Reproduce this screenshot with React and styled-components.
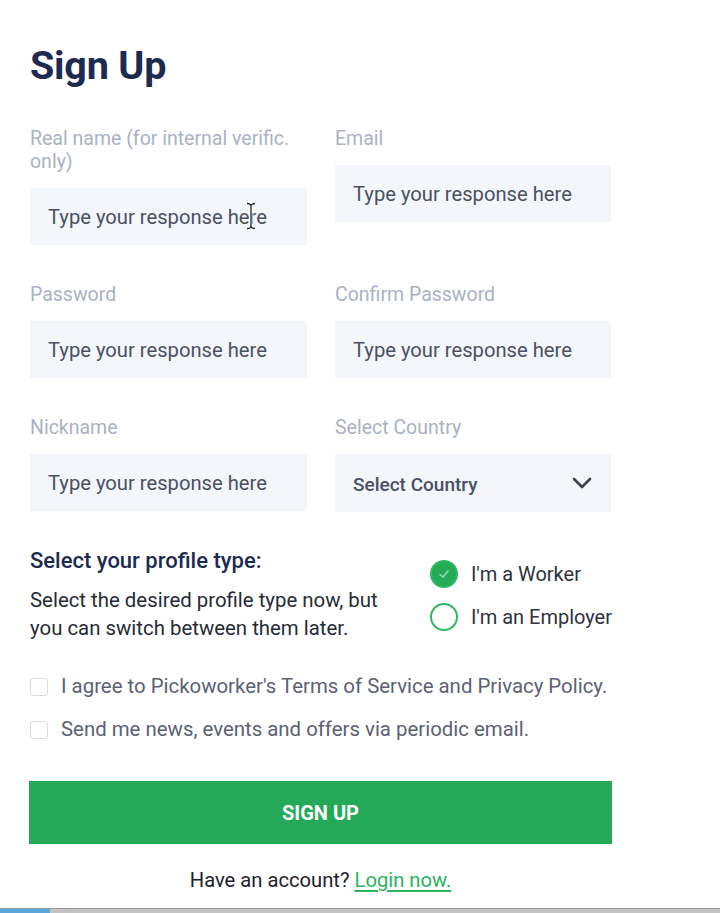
import React from 'react';
import styled, { createGlobalStyle } from 'styled-components';

const GlobalStyle = createGlobalStyle`
  html, body {
    margin: 0;
    padding: 0;
    background: #fff;
  }
  body {
    font-family: Roboto, "Noto Sans", "Liberation Sans", sans-serif;
    -webkit-font-smoothing: antialiased;
  }
`;

const fields = [
  [
    { label: 'Real name (for internal verific. only)', cursor: true },
    { label: 'Email' },
  ],
  [{ label: 'Password' }, { label: 'Confirm Password' }],
  [{ label: 'Nickname' }, { label: 'Select Country', select: true }],
];

const beam =
  'M1 1.5 C3.5 1.5 5 2.5 5 4 V24 C5 25.5 3.5 26.5 1 26.5 M9 1.5 C6.5 1.5 5 2.5 5 4 M5 24 C5 25.5 6.5 26.5 9 26.5';

const App = () => {
  return (
    <>
      <GlobalStyle />
      <Page>
        <Form>
          <Title>Sign Up</Title>
          <Fields>
            {fields.map((row, i) => (
              <Row key={i}>
                {row.map((f) => (
                  <Field key={f.label}>
                    <Label>{f.label}</Label>
                    {f.select ? (
                      <SelectBox>
                        <span>Select Country</span>
                        <svg width="20" height="12" viewBox="0 0 20 12">
                          <polyline
                            points="2,2 10,10 18,2"
                            fill="none"
                            stroke="#3c4250"
                            strokeWidth="2.6"
                            strokeLinecap="round"
                            strokeLinejoin="round"
                          />
                        </svg>
                      </SelectBox>
                    ) : (
                      <InputBox>
                        Type your response here
                        {f.cursor && (
                          <Cursor width="10" height="28" viewBox="0 0 10 28">
                            <path d={beam} fill="none" stroke="#fff" strokeWidth="3" />
                            <path d={beam} fill="none" stroke="#222" strokeWidth="1.3" />
                          </Cursor>
                        )}
                      </InputBox>
                    )}
                  </Field>
                ))}
              </Row>
            ))}
          </Fields>

          <Profile>
            <ProfileText>
              <ProfileTitle>Select your profile type:</ProfileTitle>
              <ProfileDesc>
                Select the desired profile type now, but
                <br />
                you can switch between them later.
              </ProfileDesc>
            </ProfileText>
            <Radios>
              <RadioRow>
                <RadioDot $checked>
                  <svg width="14" height="14" viewBox="0 0 14 14">
                    <polyline
                      points="3,7.5 6,10 11,4"
                      fill="none"
                      stroke="rgba(255,255,255,0.5)"
                      strokeWidth="1.6"
                      strokeLinecap="round"
                    />
                  </svg>
                </RadioDot>
                I'm a Worker
              </RadioRow>
              <RadioRow>
                <RadioDot />
                I'm an Employer
              </RadioRow>
            </Radios>
          </Profile>

          <Checks>
            <CheckRow>
              <Box />
              I agree to Pickoworker's Terms of Service and Privacy Policy.
            </CheckRow>
            <CheckRow>
              <Box />
              Send me news, events and offers via periodic email.
            </CheckRow>
          </Checks>

          <SubmitButton>SIGN UP</SubmitButton>

          <Footer>
            Have an account? <LoginLink href="#">Login now.</LoginLink>
          </Footer>
        </Form>
        <ScrollBar>
          <ScrollThumb />
        </ScrollBar>
      </Page>
    </>
  );
};

export default App;

const Page = styled.div`
  width: 720px;
  height: 913px;
  display: flex;
  flex-direction: column;
  justify-content: space-between;
  overflow: hidden;
`;

const Form = styled.div`
  width: 583px;
  padding: 42px 0 0 29px;
  display: flex;
  flex-direction: column;
`;

const Title = styled.h1`
  margin: 0 0 37px 1px;
  font-size: 39.5px;
  line-height: 48px;
  font-weight: 700;
  color: #1c2b4f;
  letter-spacing: -0.2px;
`;

const Fields = styled.div`
  display: flex;
  flex-direction: column;
  gap: 38px;
  padding-left: 1px;
`;

const Row = styled.div`
  display: grid;
  grid-template-columns: 277px 276px;
  column-gap: 28px;
  align-items: start;
`;

const Field = styled.div`
  display: flex;
  flex-direction: column;
`;

const Label = styled.div`
  font-size: 19.5px;
  line-height: 23px;
  color: #aab2c3;
  margin-bottom: 15px;
`;

const InputBox = styled.div`
  position: relative;
  height: 57px;
  background: #f3f6fa;
  display: flex;
  align-items: center;
  padding-left: 18px;
  font-size: 20.2px;
  color: #4a5162;
`;

const Cursor = styled.svg`
  position: absolute;
  left: 216px;
  top: 14px;
`;

const SelectBox = styled.div`
  height: 58px;
  background: #f3f6fa;
  display: flex;
  align-items: center;
  justify-content: space-between;
  padding: 0 19px 0 18px;
  font-size: 19px;
  font-weight: 500;
  color: #4a5162;
  span {
    padding-top: 2px;
  }
`;

const Profile = styled.div`
  display: flex;
  justify-content: space-between;
  align-items: flex-start;
  margin-top: 36px;
  padding-left: 1px;
`;

const ProfileText = styled.div`
  display: flex;
  flex-direction: column;
`;

const ProfileTitle = styled.div`
  font-size: 22px;
  line-height: 26px;
  font-weight: 500;
  color: #1c2b4f;
  margin-bottom: 12px;
`;

const ProfileDesc = styled.div`
  font-size: 20.4px;
  line-height: 28px;
  color: #262b36;
`;

const Radios = styled.div`
  display: flex;
  flex-direction: column;
  gap: 15px;
  padding-top: 12px;
`;

const RadioRow = styled.div`
  display: flex;
  align-items: center;
  gap: 13px;
  font-size: 20px;
  color: #2e3340;
`;

const RadioDot = styled.span`
  box-sizing: border-box;
  width: 28px;
  height: 28px;
  border-radius: 50%;
  border: 2px solid #2fb861;
  background: ${(p) => (p.$checked ? '#25ab58' : '#fff')};
  display: flex;
  align-items: center;
  justify-content: center;
`;

const Checks = styled.div`
  display: flex;
  flex-direction: column;
  gap: 20px;
  margin-top: 33px;
  padding-left: 1px;
`;

const CheckRow = styled.label`
  display: flex;
  align-items: center;
  gap: 13px;
  font-size: 20.4px;
  line-height: 23px;
  color: #5b6172;
`;

const Box = styled.span`
  box-sizing: border-box;
  width: 18px;
  height: 18px;
  border: 1.5px solid #d6dbe4;
  border-radius: 3px;
  background: #fff;
`;

const SubmitButton = styled.button`
  margin-top: 40px;
  height: 63px;
  width: 583px;
  border: none;
  background: #23a957;
  color: #fff;
  font-family: inherit;
  font-size: 20px;
  font-weight: 700;
  cursor: pointer;
`;

const Footer = styled.div`
  margin-top: 25px;
  text-align: center;
  font-size: 20.2px;
  line-height: 23px;
  color: #1f2229;
`;

const LoginLink = styled.a`
  color: #2bb35f;
  text-decoration: underline;
  text-underline-offset: 3px;
`;

const ScrollBar = styled.div`
  height: 4px;
  background: #c4c4c4;
  border-top: 1px solid #9a9a9a;
  display: flex;
`;

const ScrollThumb = styled.div`
  width: 50px;
  background: #5aa6dc;
`;
